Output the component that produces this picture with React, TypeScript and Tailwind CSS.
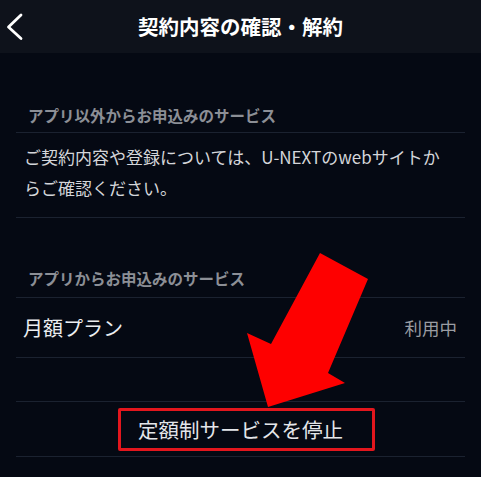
import React from "react";

export default function App() {
  return (
    <div
      className="relative w-[481px] h-[477px] overflow-hidden bg-[#050913] text-white"
      style={{ fontFamily: '"Noto Sans CJK JP", "Noto Sans", sans-serif' }}
    >
      {/* Header */}
      <div className="grid grid-cols-[48px_1fr_48px] items-center h-[53px] bg-[#0e121b]">
        <div className="flex items-center h-full">
          <svg width="30" height="53" viewBox="0 0 30 53">
            <polyline
              points="21,15 8.5,27 21,38.5"
              fill="none"
              stroke="#ffffff"
              strokeWidth="2.8"
              strokeLinecap="round"
              strokeLinejoin="round"
            />
          </svg>
        </div>
        <div className="text-center text-[20.5px] font-semibold leading-none tracking-[0px]">
          契約内容の確認・解約
        </div>
        <div />
      </div>

      <div className="h-[47px]" />

      {/* Section label 1 */}
      <div className="mx-4 h-[33px] flex items-center px-3 border-b border-[#1b2230]">
        <span className="text-[15.5px] font-semibold text-[#8c8f96] leading-none">
          アプリ以外からお申込みのサービス
        </span>
      </div>

      {/* Body text */}
      <div className="mx-4 h-[85px] pl-2 pt-[8px] border-b border-[#1b2230]">
        <p className="text-[17px] leading-[31px] text-[#d4d6da]">
          ご契約内容や登録については、U-NEXTのwebサイトか
          <br />
          らご確認ください。
        </p>
      </div>

      {/* Section label 2 */}
      <div className="mx-4 h-[80px] flex items-end px-3 pb-[9px] border-b border-[#1b2230]">
        <span className="text-[15.5px] font-semibold text-[#8c8f96] leading-[20px]">
          アプリからお申込みのサービス
        </span>
      </div>

      {/* Monthly plan row */}
      <div className="mx-4 h-[60px] flex items-center justify-between pl-[7px] pr-[8px] border-b border-[#1b2230]">
        <span className="text-[20px] text-[#eceef1] leading-none">月額プラン</span>
        <span className="text-[17.5px] text-[#9a9da3] leading-none">利用中</span>
      </div>

      {/* Empty row */}
      <div className="mx-4 h-[44px] border-b border-[#1b2230]" />

      {/* Stop button row */}
      <div className="mx-4 h-[55px] flex items-center justify-center border-b border-[#1b2230]">
        <span className="text-[20.5px] text-[#e4e6ea] leading-none">定額制サービスを停止</span>
      </div>

      {/* Annotation: red box */}
      <div className="absolute left-[118px] top-[408px] w-[257px] h-[43px] border-[3.5px] border-[#e3161d] rounded-[2px]" />

      {/* Annotation: red arrow */}
      <svg
        className="absolute left-0 top-0 pointer-events-none"
        width="481"
        height="477"
        viewBox="0 0 481 477"
      >
        <polygon
          points="320,253 368,279 328,373 345,383 268,407 247,333 271,344"
          fill="#fe0000"
        />
      </svg>
    </div>
  );
}
